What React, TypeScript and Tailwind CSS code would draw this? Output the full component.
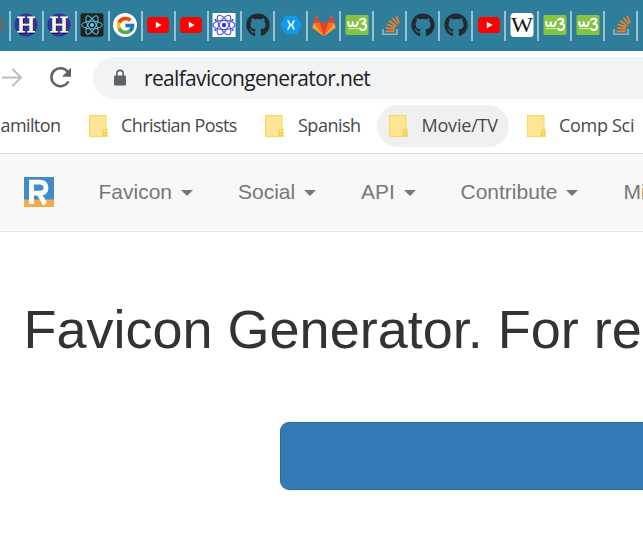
import type { ReactNode } from "react";
import { FaGithub } from "react-icons/fa";
import { FcGoogle } from "react-icons/fc";

const svg = "block h-6 w-6 overflow-visible";

function Hamilton() {
  return (
    <svg className={svg} viewBox="0 0 24 24">
      <circle cx="12" cy="12" r="11.5" fill="#333399" />
      <path d="M9.500 5v15M18.800 5v15M5 20.300h6.500M14.500 20.300h6" stroke="#151560" strokeWidth="1.200" />
      <text x="2.900" y="19" textLength="18" lengthAdjust="spacingAndGlyphs" fontFamily="Liberation Serif, serif" fontSize="22.500" stroke="#fffbe0" strokeWidth=".9" fill="#fffbe0">H</text>
    </svg>
  );
}

function ReactLogo() {
  return (
    <svg className={svg} viewBox="0 0 24 24">
      <rect x="0.500" y="0.200" width="23" height="23.600" rx="2" fill="#222" />
      <g fill="none" stroke="#5cc5e2" strokeWidth="1">
        <ellipse cx="12" cy="12" rx="10.300" ry="3.900" />
        <ellipse cx="12" cy="12" rx="10.300" ry="3.900" transform="rotate(60 12 12)" />
        <ellipse cx="12" cy="12" rx="10.300" ry="3.900" transform="rotate(120 12 12)" />
      </g>
      <circle cx="12" cy="12" r="1.900" fill="#61dafb" />
    </svg>
  );
}

function NodeAtom() {
  return (
    <svg className={svg} viewBox="0 0 24 24">
      <rect x="0.500" y="0" width="23" height="24" fill="#fff" />
      <g fill="none" stroke="#4a50ee" strokeWidth="1.100">
        <ellipse cx="12" cy="12" rx="11" ry="4.600" />
        <ellipse cx="12" cy="12" rx="11" ry="4.600" transform="rotate(60 12 12)" />
        <ellipse cx="12" cy="12" rx="11" ry="4.600" transform="rotate(120 12 12)" />
      </g>
      <g fill="#3037e8">
        <circle cx="12" cy="12" r="2.200" />
        <circle cx="3.500" cy="7" r="1.100" />
        <circle cx="20.500" cy="7" r="1.100" />
        <circle cx="3.500" cy="17" r="1.100" />
        <circle cx="20.500" cy="17" r="1.100" />
      </g>
    </svg>
  );
}

function Google() {
  return (
    <div className="flex h-6 w-6 items-center justify-center rounded-full bg-white">
      <FcGoogle size={21} />
    </div>
  );
}

function YouTube() {
  return (
    <svg className={svg} viewBox="0 0 24 24">
      <rect x="1.100" y="4" width="21.800" height="16" rx="3.600" fill="#f00" />
      <path d="M9.800 8.800v6.400l5.800-3.200z" fill="#fff" />
    </svg>
  );
}

function GitHub() {
  return <FaGithub size={24} color="#24292f" className="block" />;
}

function Xamarin() {
  return (
    <svg className={svg} viewBox="0 0 24 24">
      <path d="M7.600 2.800h8.800q1.100 0 1.700 1l4.300 7.200q.6 1 0 2l-4.300 7.200q-.6 1-1.700 1H7.600q-1.100 0-1.700-1L1.600 13q-.6-1 0-2l4.300-7.200q.6-1 1.700-1z" fill="#0f9bea" />
      <path d="M8.800 7.400 11.200 12l-2.400 4.600M15.200 7.400 12.800 12l2.400 4.600M11 12h2" fill="none" stroke="#d6efff" strokeWidth="1.900" />
    </svg>
  );
}

function GitLab() {
  return (
    <svg className={svg} viewBox="0 0 24 24">
      <path d="M12 23.300 .4 14.700 1.700 10.200 4.300 1.200 7.700 9.700h8.600l3.400-8.500 2.600 9 1.300 4.500z" fill="#fc6d26" />
      <path d="M12 23.300 7.700 9.700h8.600z" fill="#e24329" />
      <path d="M1.700 10.200.4 14.700 12 23.300zM22.300 10.200l1.300 4.500L12 23.300z" fill="#fca326" />
      <path d="M4.300 1.200 1.700 9.700h6zM19.700 1.200l2.600 8.500h-6z" fill="#e24329" />
    </svg>
  );
}

function W3() {
  return (
    <svg className={svg} viewBox="0 0 24 24">
      <rect x="0.500" y="2" width="23" height="20" rx="1" fill="#85c440" />
      <g fill="none" stroke="#fff" strokeWidth="2" strokeLinecap="round" strokeLinejoin="round">
        <path d="M3.300 9v1.500q0 2.500 2.100 2.500t2.300-2.500V9.300v1.200q0 2.500 2.200 2.500t2.700-2.800V9" />
        <path d="M15 6.800q1.900-1.500 4-1 2.300 1.200.6 3.300l-2.100 1.600q4 .1 3.600 3.300-.7 3.300-3.900 3-1.900-.3-2.200-1.600" />
      </g>
      <path d="M3.500 15.600h10.200" stroke="#edf7df" strokeWidth="1" strokeDasharray="1.500 .4" />
    </svg>
  );
}

function StackOverflow() {
  return (
    <svg className={svg} viewBox="0 0 24 24">
      <path d="M5 16v5.200h14V16" fill="none" stroke="#a5adb5" strokeWidth="1.600" />
      <path d="M7.600 18.300h8.800M7.900 14.800l8.700 1.400M8.900 11.200l8.200 3.200M11.200 7.800l7 5.200M14.400 4.800l5.300 6.400M18.200 3.200l2.900 6.800" stroke="#f48024" strokeWidth="1.700" />
    </svg>
  );
}

function Wikipedia() {
  return (
    <svg className={svg} viewBox="0 0 24 24">
      <rect x="0.500" y="0" width="23" height="24" rx="3.500" fill="#fff" />
      <text x="1" y="18.800" textLength="22" lengthAdjust="spacingAndGlyphs" fontFamily="Liberation Serif, serif" fontSize="20.500" fill="#111">W</text>
    </svg>
  );
}

const tabs: ReactNode[] = [
  <Hamilton />, <Hamilton />, <ReactLogo />, <Google />, <YouTube />, <YouTube />,
  <NodeAtom />, <GitHub />, <Xamarin />, <GitLab />, <W3 />, <StackOverflow />, <GitHub />, <GitHub />,
  <YouTube />, <Wikipedia />, <W3 />, <W3 />, <StackOverflow />,
];

function Folder() {
  return (
    <svg className="block h-[22px] w-[19px] shrink-0" viewBox="0 0 19 22">
      <path d="M.6.600h16.300v13.600h1.100v7.100H.6z" fill="#ffe694" stroke="#fbd75b" strokeWidth="1.200" />
      <path d="M14.200 20.800v-4.300q0-2 1.700-2t1.700 2v4.300zM15.900 17v2" fill="#ffe27d" stroke="#edc84c" strokeWidth="1" />
    </svg>
  );
}

function Bookmark({ label, className, textClass }: { label: string; className: string; textClass: string }) {
  return (
    <div className={`flex h-[42px] shrink-0 items-center rounded-full ${className}`}>
      <Folder />
      <span className={`mb-[3px] block whitespace-nowrap ${textClass}`}>{label}</span>
    </div>
  );
}

function MenuItem({ label, className }: { label: string; className: string }) {
  return (
    <div className={`flex shrink-0 items-center ${className}`}>
      <span>{label}</span>
      <svg className="ml-[9px] mt-[2px] h-[6px] w-3" viewBox="0 0 12 6">
        <path d="M0 0h12L6 6z" fill="#777" />
      </svg>
    </div>
  );
}

export default function App() {
  return (
    <div className="h-[540px] w-[643px] overflow-hidden bg-white">
      <div className="flex h-[51px] overflow-hidden bg-[#2e7d9a]">
        <div className="flex w-[9px] shrink-0 items-start justify-end overflow-hidden pt-[13px]">
          <div className="mr-[5px] h-6 w-6 shrink-0 rounded-full bg-[#5c6c72]" />
        </div>
        {tabs.map((icon, i) => (
          <div key={i} className="flex w-[33.030px] shrink-0 pt-[11px]">
            <div className="h-[30px] w-[1.500px] bg-[#98c2d1]" />
            <div className="ml-[3.900px] mt-[2px]">{icon}</div>
          </div>
        ))}
        <div className="mt-[11px] h-[30px] w-[1.500px] bg-[#98c2d1]" />
      </div>

      <div className="flex h-[54px] items-start pt-[6px]">
        <svg className="h-[42px] w-[93px] shrink-0" viewBox="0 0 93 42">
          <path d="M2 20.500h18M12.500 12l8.500 8.500-8.500 8.500" fill="none" stroke="#bcbdbf" strokeWidth="2" />
          <path d="M68 15.300A9 9 0 1 0 68.300 24.500" fill="none" stroke="#5f6368" strokeWidth="2.500" />
          <path d="M71 10.800v9h-9z" fill="#5f6368" />
        </svg>
        <div className="flex h-[42px] flex-1 items-center rounded-l-full bg-[#f1f3f4] pl-[20px]">
          <svg className="h-[18px] w-[14px]" viewBox="0 0 14 18">
            <rect x="1" y="6.500" width="12" height="10" rx="1.200" fill="#5f6368" />
            <path d="M3.800 7V4.600a3.200 3.200 0 0 1 6.400 0V7" fill="none" stroke="#5f6368" strokeWidth="1.600" />
          </svg>
          <span className="ml-[17px] whitespace-nowrap font-['Open_Sans',sans-serif] text-[21px] leading-[30px] tracking-[-0.660px] text-[#202124]">realfavicongenerator.net</span>
        </div>
      </div>

      <div className="flex h-[49px] items-start overflow-hidden border-b border-[#dadce0] font-['Open_Sans',sans-serif] text-[18px] leading-[26px] text-[#46494d]">
        <div className="flex h-[42px] w-[89px] shrink-0 items-center"><span className="mb-[3px] ml-[0.500px] tracking-[-0.600px]">amilton</span></div>
        <Bookmark label="Christian Posts" className="w-[176px]" textClass="ml-[13px] tracking-[-0.600px]" />
        <Bookmark label="Spanish" className="w-[112px]" textClass="ml-[14px] tracking-[-0.500px]" />
        <Bookmark label="Movie/TV" className="w-[132px] bg-[#f0f0f0] pl-[12px]" textClass="ml-[13.500px] tracking-[-0.200px]" />
        <Bookmark label="Comp Sci" className="ml-[18px]" textClass="ml-[13px] tracking-[-0.300px]" />
      </div>

      <div className="flex h-[78px] items-center overflow-hidden border-b border-[#e4e4e4] bg-[#f8f8f8] pb-[2px] font-['Liberation_Sans',Arial,sans-serif] text-[21px] leading-[30px] text-[#777]">
        <svg className="ml-6 h-[30px] w-[30px] shrink-0" viewBox="0 0 30 30">
          <path d="M0 0h30v30H0z" fill="#428bca" />
          <path d="M0 22.500h30V30H0z" fill="#f0ad4e" />
          <path d="M7.500 27V5.200h8q6.500 0 6.500 5.800 0 5.200-6.500 5.200h-8M14.500 16l6.700 11" fill="none" stroke="#fff" strokeWidth="4.800" />
        </svg>
        <MenuItem label="Favicon" className="ml-[44.500px] w-[139.500px]" />
        <MenuItem label="Social" className="w-[123px]" />
        <MenuItem label="API" className="w-[99.500px]" />
        <MenuItem label="Contribute" className="w-[163px]" />
        <span className="whitespace-nowrap">Mi</span>
      </div>

      <h1 className="ml-[23.500px] mt-[67px] h-[60px] whitespace-nowrap font-['Liberation_Sans',Arial,sans-serif] text-[54px] leading-[60px] text-[#333]">Favicon Generator. For re</h1>
      <div className="ml-[280px] mt-[63px] h-[68px] w-[420px] rounded-[9px] border border-[#2e6da4] bg-[#337ab7]" />
    </div>
  );
}
